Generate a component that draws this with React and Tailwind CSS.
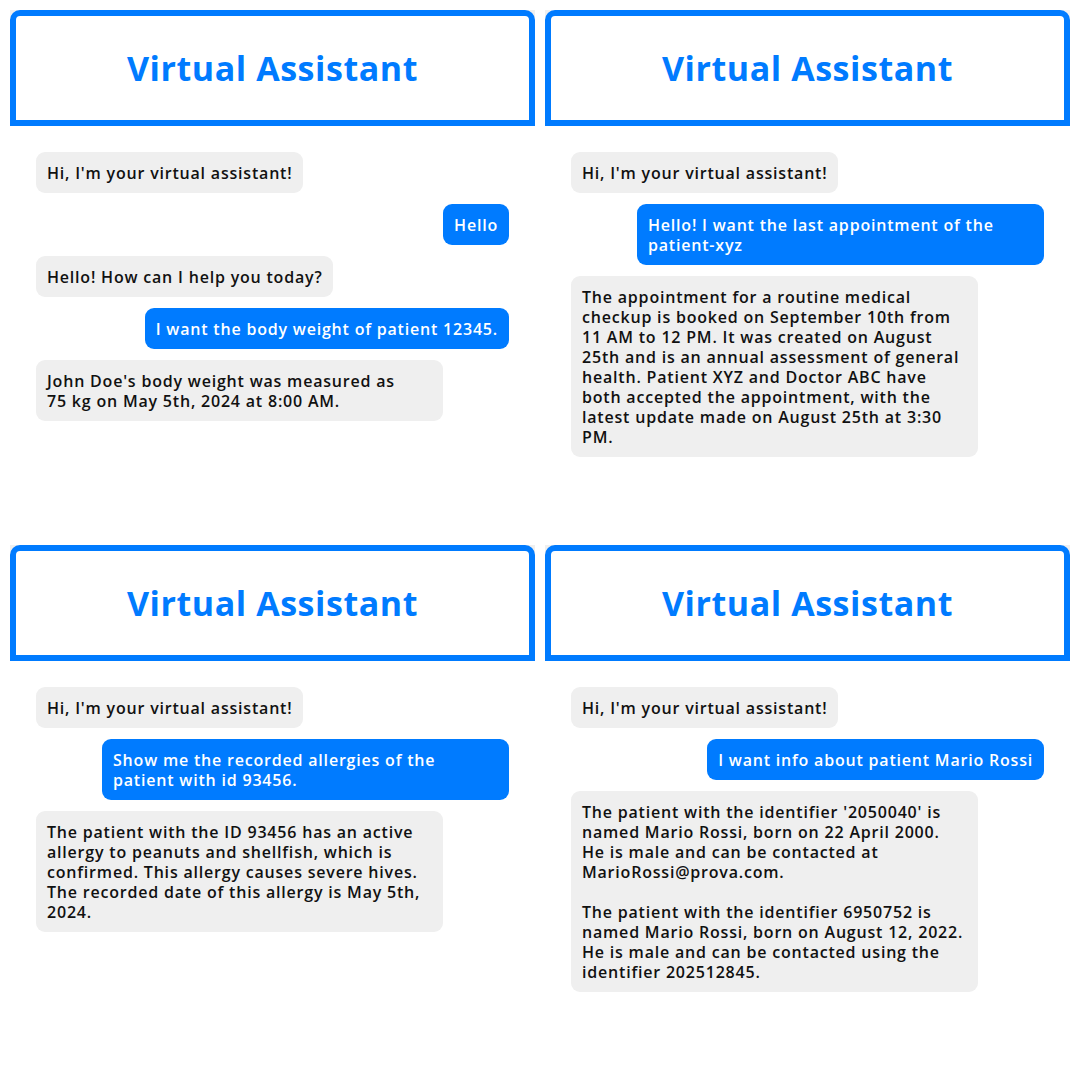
import React from "react";

const panels = [
    [
        { from: "bot", lines: ["Hi, I'm your virtual assistant!"] },
        { from: "user", lines: ["Hello"] },
        { from: "bot", lines: ["Hello! How can I help you today?"] },
        { from: "user", lines: ["I want the body weight of patient 12345."] },
        { from: "bot", wide: true, lines: ["John Doe's body weight was measured as", "75 kg on May 5th, 2024 at 8:00 AM."] },
    ],
    [
        { from: "bot", lines: ["Hi, I'm your virtual assistant!"] },
        { from: "user", wide: true, lines: ["Hello! I want the last appointment of the", "patient-xyz"] },
        {
            from: "bot",
            wide: true,
            lines: [
                "The appointment for a routine medical",
                "checkup is booked on September 10th from",
                "11 AM to 12 PM. It was created on August",
                "25th and is an annual assessment of general",
                "health. Patient XYZ and Doctor ABC have",
                "both accepted the appointment, with the",
                "latest update made on August 25th at 3:30",
                "PM.",
            ],
        },
    ],
    [
        { from: "bot", lines: ["Hi, I'm your virtual assistant!"] },
        { from: "user", wide: true, lines: ["Show me the recorded allergies of the", "patient with id 93456."] },
        {
            from: "bot",
            wide: true,
            lines: [
                "The patient with the ID 93456 has an active",
                "allergy to peanuts and shellfish, which is",
                "confirmed. This allergy causes severe hives.",
                "The recorded date of this allergy is May 5th,",
                "2024.",
            ],
        },
    ],
    [
        { from: "bot", lines: ["Hi, I'm your virtual assistant!"] },
        { from: "user", lines: ["I want info about patient Mario Rossi"] },
        {
            from: "bot",
            wide: true,
            lines: [
                "The patient with the identifier '2050040' is",
                "named Mario Rossi, born on 22 April 2000.",
                "He is male and can be contacted at",
                "MarioRossi@prova.com.",
                "",
                "The patient with the identifier 6950752 is",
                "named Mario Rossi, born on August 12, 2022.",
                "He is male and can be contacted using the",
                "identifier 202512845.",
            ],
        },
    ],
];

function Bubble({ msg }) {
    const isUser = msg.from === "user";
    return (
        <div
            className={
                (isUser ? "self-end bg-[#007bff] text-white" : "self-start bg-[#efefef] text-[#111]") +
                (msg.wide ? " w-[407px]" : "") +
                " rounded-[9px] px-[11px] py-[10.5px] text-[16px] leading-[20px] tracking-[0.8px] font-semibold"
            }
        >
            {msg.lines.map((line, i) => (
                <div key={i} className="whitespace-nowrap h-[20px]">
                    {line}
                </div>
            ))}
        </div>
    );
}

function Panel({ messages }) {
    return (
        <div className="flex flex-col bg-white">
            <div className="bg-[#efefef]">
                <div className="h-[116px] rounded-t-[10px] border-[6px] border-[#007bff] bg-white flex items-center justify-center">
                    <h1 className="text-[#007bff] font-bold text-[34px] tracking-[0.55px]">Virtual Assistant</h1>
                </div>
            </div>
            <div className="flex flex-col gap-[11px] px-[26px] pt-[26px]">
                {messages.map((m, i) => (
                    <Bubble key={i} msg={m} />
                ))}
            </div>
        </div>
    );
}

export default function App() {
    return (
        <div
            className="w-[1080px] h-[1080px] bg-white grid grid-cols-2 grid-rows-2 gap-[10px] p-[10px]"
            style={{ fontFamily: '"Open Sans", "Noto Sans", sans-serif' }}
        >
            {panels.map((p, i) => (
                <Panel key={i} messages={p} />
            ))}
        </div>
    );
}
